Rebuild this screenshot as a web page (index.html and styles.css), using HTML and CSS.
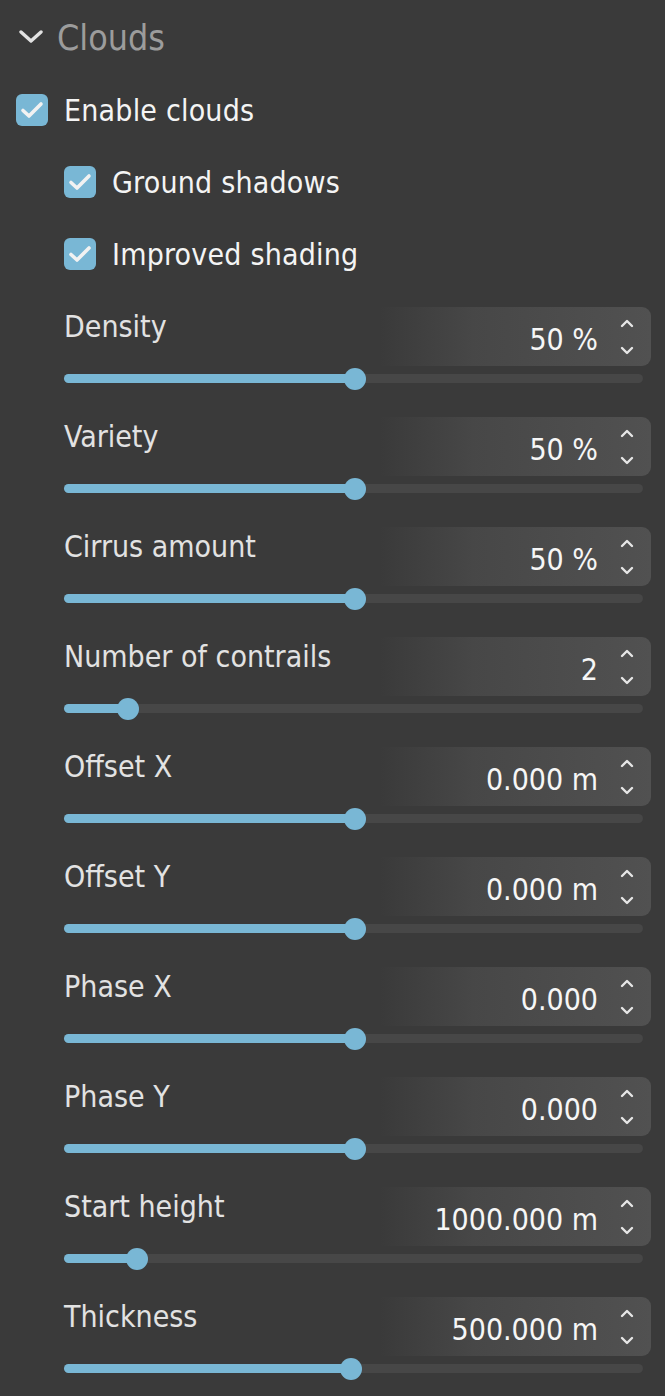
FILE: index.html
```html
<!DOCTYPE html>
<html>
<head>
<meta charset="utf-8">
<link rel="stylesheet" href="styles.css">
</head>
<body>
<div class="panel">
  <div class="header">
    <svg class="chev" width="24" height="16" viewBox="0 0 24 16"><path d="M2 3 L12 12 L22 3" fill="none" stroke="#e2e2e2" stroke-width="3.4" stroke-linecap="round" stroke-linejoin="round"/></svg>
    <span class="title">Clouds</span>
  </div>

  <div class="check-row main">
    <span class="box"><svg width="32" height="32" viewBox="0 0 32 32"><path d="M7 16.5 L13 22 L25 10" fill="none" stroke="#f2f2f2" stroke-width="3.6" stroke-linecap="round" stroke-linejoin="round"/></svg></span>
    <span class="ctext">Enable clouds</span>
  </div>
  <div class="check-row sub">
    <span class="box"><svg width="32" height="32" viewBox="0 0 32 32"><path d="M7 16.5 L13 22 L25 10" fill="none" stroke="#f2f2f2" stroke-width="3.6" stroke-linecap="round" stroke-linejoin="round"/></svg></span>
    <span class="ctext">Ground shadows</span>
  </div>
  <div class="check-row sub">
    <span class="box"><svg width="32" height="32" viewBox="0 0 32 32"><path d="M7 16.5 L13 22 L25 10" fill="none" stroke="#f2f2f2" stroke-width="3.6" stroke-linecap="round" stroke-linejoin="round"/></svg></span>
    <span class="ctext">Improved shading</span>
  </div>

  <div class="sliders">
    <div class="srow">
      <div class="top"><span class="label">Density</span><div class="field"><span class="val">50 %</span><span class="spin"><svg width="14" height="36" viewBox="0 0 14 36"><path d="M2 7 L7 2 L12 7 M2 29 L7 34 L12 29" fill="none" stroke="#e6e6e6" stroke-width="2.4" stroke-linecap="round" stroke-linejoin="round"/></svg></span></div></div>
      <div class="track"><div class="fill" style="width:50.3%"><span class="thumb"></span></div></div>
    </div>
    <div class="srow">
      <div class="top"><span class="label">Variety</span><div class="field"><span class="val">50 %</span><span class="spin"><svg width="14" height="36" viewBox="0 0 14 36"><path d="M2 7 L7 2 L12 7 M2 29 L7 34 L12 29" fill="none" stroke="#e6e6e6" stroke-width="2.4" stroke-linecap="round" stroke-linejoin="round"/></svg></span></div></div>
      <div class="track"><div class="fill" style="width:50.3%"><span class="thumb"></span></div></div>
    </div>
    <div class="srow">
      <div class="top"><span class="label">Cirrus amount</span><div class="field"><span class="val">50 %</span><span class="spin"><svg width="14" height="36" viewBox="0 0 14 36"><path d="M2 7 L7 2 L12 7 M2 29 L7 34 L12 29" fill="none" stroke="#e6e6e6" stroke-width="2.4" stroke-linecap="round" stroke-linejoin="round"/></svg></span></div></div>
      <div class="track"><div class="fill" style="width:50.3%"><span class="thumb"></span></div></div>
    </div>
    <div class="srow">
      <div class="top"><span class="label">Number of contrails</span><div class="field"><span class="val">2</span><span class="spin"><svg width="14" height="36" viewBox="0 0 14 36"><path d="M2 7 L7 2 L12 7 M2 29 L7 34 L12 29" fill="none" stroke="#e6e6e6" stroke-width="2.4" stroke-linecap="round" stroke-linejoin="round"/></svg></span></div></div>
      <div class="track"><div class="fill" style="width:11.1%"><span class="thumb"></span></div></div>
    </div>
    <div class="srow">
      <div class="top"><span class="label">Offset X</span><div class="field"><span class="val">0.000 m</span><span class="spin"><svg width="14" height="36" viewBox="0 0 14 36"><path d="M2 7 L7 2 L12 7 M2 29 L7 34 L12 29" fill="none" stroke="#e6e6e6" stroke-width="2.4" stroke-linecap="round" stroke-linejoin="round"/></svg></span></div></div>
      <div class="track"><div class="fill" style="width:50.3%"><span class="thumb"></span></div></div>
    </div>
    <div class="srow">
      <div class="top"><span class="label">Offset Y</span><div class="field"><span class="val">0.000 m</span><span class="spin"><svg width="14" height="36" viewBox="0 0 14 36"><path d="M2 7 L7 2 L12 7 M2 29 L7 34 L12 29" fill="none" stroke="#e6e6e6" stroke-width="2.4" stroke-linecap="round" stroke-linejoin="round"/></svg></span></div></div>
      <div class="track"><div class="fill" style="width:50.3%"><span class="thumb"></span></div></div>
    </div>
    <div class="srow">
      <div class="top"><span class="label">Phase X</span><div class="field"><span class="val">0.000</span><span class="spin"><svg width="14" height="36" viewBox="0 0 14 36"><path d="M2 7 L7 2 L12 7 M2 29 L7 34 L12 29" fill="none" stroke="#e6e6e6" stroke-width="2.4" stroke-linecap="round" stroke-linejoin="round"/></svg></span></div></div>
      <div class="track"><div class="fill" style="width:50.3%"><span class="thumb"></span></div></div>
    </div>
    <div class="srow">
      <div class="top"><span class="label">Phase Y</span><div class="field"><span class="val">0.000</span><span class="spin"><svg width="14" height="36" viewBox="0 0 14 36"><path d="M2 7 L7 2 L12 7 M2 29 L7 34 L12 29" fill="none" stroke="#e6e6e6" stroke-width="2.4" stroke-linecap="round" stroke-linejoin="round"/></svg></span></div></div>
      <div class="track"><div class="fill" style="width:50.3%"><span class="thumb"></span></div></div>
    </div>
    <div class="srow">
      <div class="top"><span class="label">Start height</span><div class="field"><span class="val">1000.000 m</span><span class="spin"><svg width="14" height="36" viewBox="0 0 14 36"><path d="M2 7 L7 2 L12 7 M2 29 L7 34 L12 29" fill="none" stroke="#e6e6e6" stroke-width="2.4" stroke-linecap="round" stroke-linejoin="round"/></svg></span></div></div>
      <div class="track"><div class="fill" style="width:12.6%"><span class="thumb"></span></div></div>
    </div>
    <div class="srow">
      <div class="top"><span class="label">Thickness</span><div class="field"><span class="val">500.000 m</span><span class="spin"><svg width="14" height="36" viewBox="0 0 14 36"><path d="M2 7 L7 2 L12 7 M2 29 L7 34 L12 29" fill="none" stroke="#e6e6e6" stroke-width="2.4" stroke-linecap="round" stroke-linejoin="round"/></svg></span></div></div>
      <div class="track"><div class="fill" style="width:49.6%"><span class="thumb"></span></div></div>
    </div>
  </div>
</div>
</body>
</html>
```

FILE: styles.css
```css
html, body { margin: 0; padding: 0; background: #3a3a3a; }
body { width: 665px; height: 1396px; overflow: hidden; font-family: "DejaVu Sans Condensed", "DejaVu Sans", sans-serif; color: #e4e4e4; }
.panel { display: flex; flex-direction: column; }
.header { height: 74px; display: flex; align-items: center; }
.chev { margin-left: 19px; margin-right: 14px; }
.title { font-size: 35.5px; color: #9c9c9c; }
.check-row { height: 72px; display: flex; align-items: center; }
.check-row.main { padding-left: 16px; }
.check-row.sub { padding-left: 64px; }
.box { width: 32px; height: 32px; border-radius: 6px; background: #79b7d5; display: flex; margin-right: 16px; }
.ctext { font-size: 30px; letter-spacing: 0.2px; color: #f4f4f4; }

.sliders { padding-top: 17px; padding-left: 64px; display: flex; flex-direction: column; }
.srow { width: 587px; height: 110px; }
.top { display: flex; justify-content: space-between; align-items: flex-start; height: 59px; }
.label { font-size: 30px; line-height: 40px; color: #e2e2e2; }
.field { width: 272px; height: 59px; border-radius: 0 9px 9px 0; background: linear-gradient(to right, rgba(82,82,82,0) 0%, rgba(82,82,82,0.55) 35%, #515151 100%); display: flex; align-items: center; justify-content: flex-end; padding-right: 17px; box-sizing: border-box; }
.val { font-size: 30px; color: #f6f6f6; margin-top: 6px; margin-right: 22px; }
.spin { display: flex; width: 14px; height: 36px; }
.track { margin-top: 8px; width: 579px; height: 9px; border-radius: 5px; background: #474747; }
.fill { height: 9px; border-radius: 5px; background: #79b7d5; position: relative; }
.thumb { position: absolute; right: -11px; top: -6px; width: 22px; height: 22px; border-radius: 50%; background: #79b7d5; }
```
